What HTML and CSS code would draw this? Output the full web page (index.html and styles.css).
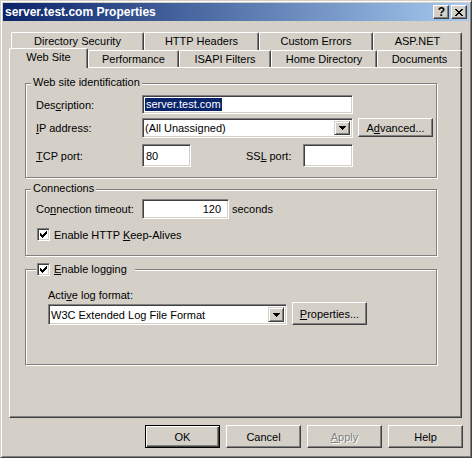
FILE: index.html
```html
<!DOCTYPE html>
<html>
<head>
<meta charset="utf-8">
<title>server.test.com Properties</title>
<link rel="stylesheet" href="styles.css">
</head>
<body>
<div class="window">
  <div class="titlebar">
    <span class="title">server.test.com Properties</span>
    <div class="caption-buttons">
      <span class="cap-btn cap-help">?</span>
      <span class="cap-btn"><svg width="8" height="7" viewBox="0 0 8 7" shape-rendering="crispEdges"><path d="M0 0h2v1h-2zM6 0h2v1h-2zM1 1h2v1h-2zM5 1h2v1h-2zM2 2h4v1h-4zM3 3h2v1h-2zM2 4h4v1h-4zM1 5h2v1h-2zM5 5h2v1h-2zM0 6h2v1h-2zM6 6h2v1h-2z" fill="#000"/></svg></span>
    </div>
  </div>
  <div class="client">
    <div class="tabs">
      <div class="tab-row back">
        <div class="tab t-dirsec">Directory Security</div>
        <div class="tab t-http">HTTP Headers</div>
        <div class="tab t-errors">Custom Errors</div>
        <div class="tab t-asp">ASP.NET</div>
      </div>
      <div class="tab-row front">
        <div class="tab selected t-web">Web Site</div>
        <div class="tab t-perf">Performance</div>
        <div class="tab t-isapi">ISAPI Filters</div>
        <div class="tab t-home">Home Directory</div>
        <div class="tab t-docs">Documents</div>
      </div>
    </div>
    <div class="panel">
      <section class="group g-ident">
        <div class="group-title"><span class="legend">Web site identification</span></div>
        <div class="row r-desc">
          <label class="lbl">Des<u>c</u>ription:</label>
          <div class="textbox w-wide"><span class="sel">server.test.com</span></div>
        </div>
        <div class="row r-ip">
          <label class="lbl"><u>I</u>P address:</label>
          <div class="textbox combo w-wide">
            <span class="combo-text">(All Unassigned)</span>
            <span class="drop"><svg width="7" height="4" viewBox="0 0 7 4" shape-rendering="crispEdges"><path d="M0 0h7v1h-7zM1 1h5v1h-5zM2 2h3v1h-3zM3 3h1v1h-1z" fill="#000"/></svg></span>
          </div>
          <span class="btn btn-adv">A<u>d</u>vanced...</span>
        </div>
        <div class="row r-tcp">
          <label class="lbl"><u>T</u>CP port:</label>
          <div class="textbox w-tcp"><span class="val">80</span></div>
          <label class="lbl-ssl">SS<u>L</u> port:</label>
          <div class="textbox w-ssl"></div>
        </div>
      </section>

      <section class="group g-conn">
        <div class="group-title"><span class="legend">Connections</span></div>
        <div class="row r-timeout">
          <label class="lbl">Co<u>n</u>nection timeout:</label>
          <div class="textbox w-timeout"><span class="val">120</span></div>
          <span class="unit">seconds</span>
        </div>
        <div class="row r-check">
          <span class="check"><svg width="9" height="9" viewBox="0 0 9 9" shape-rendering="crispEdges"><path d="M7 1h1v1h-1zM6 2h2v1h-2zM1 3h1v1h-1zM5 3h3v1h-3zM1 4h2v1h-2zM4 4h3v1h-3zM1 5h5v1h-5zM2 6h3v1h-3zM3 7h1v1h-1z" fill="#000"/></svg></span>
          <span class="check-label">Enable HTTP <u>K</u>eep-Alives</span>
        </div>
      </section>

      <section class="group g-log">
        <div class="group-title">
          <span class="legend legend-check">
            <span class="check"><svg width="9" height="9" viewBox="0 0 9 9" shape-rendering="crispEdges"><path d="M7 1h1v1h-1zM6 2h2v1h-2zM1 3h1v1h-1zM5 3h3v1h-3zM1 4h2v1h-2zM4 4h3v1h-3zM1 5h5v1h-5zM2 6h3v1h-3zM3 7h1v1h-1z" fill="#000"/></svg></span>
            <span class="check-label"><u>E</u>nable logging</span>
          </span>
        </div>
        <div class="log-label">Acti<u>v</u>e log format:</div>
        <div class="row r-log">
          <div class="textbox combo w-log">
            <span class="combo-text">W3C Extended Log File Format</span>
            <span class="drop"><svg width="7" height="4" viewBox="0 0 7 4" shape-rendering="crispEdges"><path d="M0 0h7v1h-7zM1 1h5v1h-5zM2 2h3v1h-3zM3 3h1v1h-1z" fill="#000"/></svg></span>
          </div>
          <span class="btn btn-props"><u>P</u>roperties...</span>
        </div>
      </section>
    </div>
    <div class="buttons">
      <span class="btn btn-default">OK</span>
      <span class="btn">Cancel</span>
      <span class="btn disabled"><u>A</u>pply</span>
      <span class="btn">Help</span>
    </div>
  </div>
</div>
</body>
</html>
```

FILE: styles.css
```css
* { box-sizing: border-box; }
html, body { margin: 0; padding: 0; }
body {
  font-family: "Liberation Sans", Arial, sans-serif;
  font-size: 11px;
  color: #000;
  background: #d4d0c8;
  width: 472px;
  height: 458px;
  overflow: hidden;
}
u { text-decoration: underline; text-underline-offset: 1px; }

.window {
  width: 472px;
  height: 458px;
  background: #d4d0c8;
  border: 1px solid;
  border-color: #d4d0c8 #404040 #404040 #d4d0c8;
  box-shadow: inset 1px 1px #fff, inset -1px -1px #808080;
  padding: 2px;
  display: flex;
  flex-direction: column;
}

/* title bar */
.titlebar {
  height: 18px;
  flex: none;
  background: linear-gradient(to right, #0a246a, #a6caf0);
  display: flex;
  align-items: center;
  justify-content: space-between;
  padding: 0 2px;
}
.title {
  color: #fff;
  font-weight: bold;
  font-size: 12px;
  line-height: 14px;
}
.caption-buttons { display: flex; gap: 2px; }
.cap-btn {
  width: 16px;
  height: 14px;
  background: #d4d0c8;
  border: 1px solid;
  border-color: #fff #404040 #404040 #fff;
  box-shadow: inset -1px -1px #808080;
  display: flex;
  align-items: center;
  justify-content: center;
}
.cap-help {
  font-weight: bold;
  font-size: 12px;
  line-height: 12px;
  padding-left: 1px;
}

/* client */
.client {
  flex: 1;
  display: flex;
  flex-direction: column;
  padding: 11px 6px 7px 6px;
}

/* tabs */
.tab-row { display: flex; }
.tab-row.back { height: 18px; padding-left: 2px; }
.tab-row.front { height: 17px; align-items: flex-end; }
.tab {
  height: 18px;
  background: #d4d0c8;
  border-top: 1px solid #fff;
  border-left: 1px solid #fff;
  border-right: 1px solid #404040;
  box-shadow: inset -1px 0 #808080;
  border-radius: 2px 2px 0 0;
  display: flex;
  align-items: center;
  justify-content: center;
  white-space: nowrap;
  padding-bottom: 1px;
}
.front .tab { height: 17px; }
.front .tab.selected {
  height: 20px;
  margin-top: -2px;
  margin-bottom: -1px;
  padding-bottom: 4px;
  position: relative;
  z-index: 1;
}
.t-dirsec { width: 133px; }
.t-http { width: 115px; }
.t-errors { width: 114px; }
.t-asp { width: 89px; }
.t-web { width: 79px; }
.t-perf { width: 91px; }
.t-isapi { width: 92px; }
.t-home { width: 106px; }
.t-docs { width: 85px; }

/* panel */
.panel {
  width: 453px;
  height: 351px;
  flex: none;
  border: 1px solid;
  border-color: #fff #404040 #404040 #fff;
  box-shadow: inset -1px -1px #808080;
  padding: 0;
}

/* group boxes */
.group {
  width: 412px;
  margin-left: 15px;
  border: 1px solid #808080;
  box-shadow: inset 1px 1px #fff, 1px 1px #fff;
  padding: 0 0 0 10px;
}
.group-title {
  height: 13px;
  margin-top: -7px;
  margin-left: -10px;
  line-height: 13px;
  display: flex;
}
.legend {
  background: #d4d0c8;
  padding: 0 2px;
  margin-left: 5px;
  margin-top: -1px;
}
.legend-check {
  display: flex;
  align-items: center;
  width: 99px;
  padding: 0 0 0 1px;
  margin-left: 10px;
  margin-top: 0;
}
.g-ident { margin-top: 15px; padding-bottom: 10px; }
.g-conn { margin-top: 11px; padding-bottom: 14px; }
.g-log { margin-top: 13px; padding-bottom: 39px; }

.row { display: flex; align-items: center; }
.lbl { width: 106px; flex: none; white-space: nowrap; }
.r-desc { margin-top: 5px; height: 19px; }
.r-ip { margin-top: 4px; height: 20px; }
.r-tcp { margin-top: 6px; height: 23px; }
.r-timeout { margin-top: 3px; height: 20px; }
.r-check { margin-top: 9px; height: 13px; padding-left: 1px; }

/* controls */
.textbox {
  background: #fff;
  border: 1px solid;
  border-color: #808080 #fff #fff #808080;
  box-shadow: inset 1px 1px #404040, inset -1px -1px #d4d0c8;
  padding: 0 2px 0 2px;
  display: flex;
  align-items: center;
  height: 100%;
  flex: none;
  white-space: nowrap;
}
.w-wide { width: 211px; }
.w-tcp { width: 49px; padding-left: 3px; }
.w-ssl { width: 50px; }
.w-timeout { width: 87px; justify-content: flex-end; padding-right: 7px; }
.lbl-ssl { width: 57px; margin-left: 55px; white-space: nowrap; }
.unit { margin-left: 3px; }
.sel {
  background: #0a246a;
  color: #fff;
  padding: 0 1px;
  line-height: 13px;
}
.combo {
  justify-content: space-between;
  padding: 2px;
}
.drop {
  width: 16px;
  height: 100%;
  background: #d4d0c8;
  border: 1px solid;
  border-color: #d4d0c8 #404040 #404040 #d4d0c8;
  box-shadow: inset 1px 1px #fff, inset -1px -1px #808080;
  display: flex;
  align-items: center;
  justify-content: center;
  flex: none;
}

.btn {
  width: 75px;
  height: 23px;
  flex: none;
  background: #d4d0c8;
  border: 1px solid;
  border-color: #fff #404040 #404040 #fff;
  box-shadow: inset -1px -1px #808080;
  display: flex;
  align-items: center;
  justify-content: center;
  white-space: nowrap;
}
.btn-adv { height: 19px; margin-left: 5px; align-self: flex-start; }
.btn-props { height: 23px; margin-left: 5px; }
.btn-default {
  border-color: #000;
  box-shadow: inset 1px 1px #fff, inset -1px -1px #404040, inset -2px -2px #808080;
}
.btn.disabled { color: #808080; text-shadow: 1px 1px #fff; }

.check {
  width: 13px;
  height: 13px;
  flex: none;
  background: #fff;
  border: 1px solid;
  border-color: #808080 #fff #fff #808080;
  box-shadow: inset 1px 1px #404040, inset -1px -1px #d4d0c8;
  padding: 1px;
  display: flex;
}
.check svg { display: block; }
.check-label { margin-left: 4px; white-space: nowrap; }

.log-label {
  margin-top: 13px;
  margin-left: 12px;
  height: 13px;
  line-height: 13px;
}
.r-log { height: 23px; margin-left: 12px; align-items: flex-end; }
.w-log { width: 239px; height: 21px; }

.buttons {
  display: flex;
  justify-content: flex-end;
  gap: 6px;
  margin-top: 7px;
}
```
